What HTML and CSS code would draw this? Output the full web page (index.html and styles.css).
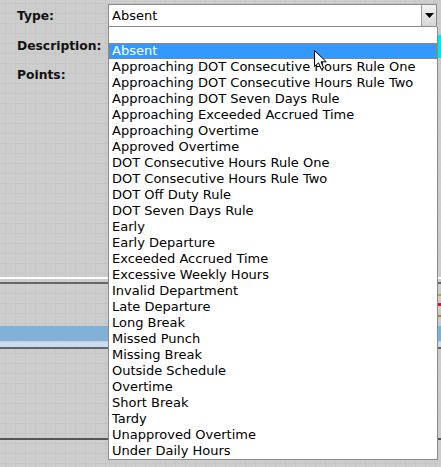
FILE: index.html
```html
<!DOCTYPE html>
<html>
<head>
<meta charset="utf-8">
<link rel="stylesheet" href="styles.css">
</head>
<body>
<div class="page">
  <div class="form">
    <div class="row row-type">
      <div class="label">Type:</div>
      <div class="select">
        <span class="select-value">Absent</span>
        <span class="select-btn"><svg width="9" height="5" viewBox="0 0 9 5"><path d="M0 0H9L4.5 5Z" fill="#000"/></svg></span>
      </div>
    </div>
    <div class="row row-desc">
      <div class="label">Description:</div>
      <div class="desc-field"></div>
    </div>
    <div class="row row-points">
      <div class="label">Points:</div>
      <div class="points-field"></div>
    </div>
  </div>
  <div class="sep-white"></div>
  <div class="sep-dark"></div>
  <div class="middle">
    <div class="mid-widget">
      <div class="mw-olive"></div>
      <div class="mw-red"></div>
      <div class="mw-olive2"></div>
    </div>
  </div>
  <div class="bar-blue"></div>
  <div class="bar-light"></div>
  <div class="bar-line"></div>
  <div class="lower"></div>
  <div class="bottom-line"></div>

  <ul class="dropdown">
    <li class="opt"></li>
    <li class="opt selected">Absent</li>
    <li class="opt">Approaching DOT Consecutive Hours Rule One</li>
    <li class="opt">Approaching DOT Consecutive Hours Rule Two</li>
    <li class="opt">Approaching DOT Seven Days Rule</li>
    <li class="opt">Approaching Exceeded Accrued Time</li>
    <li class="opt">Approaching Overtime</li>
    <li class="opt">Approved Overtime</li>
    <li class="opt">DOT Consecutive Hours Rule One</li>
    <li class="opt">DOT Consecutive Hours Rule Two</li>
    <li class="opt">DOT Off Duty Rule</li>
    <li class="opt">DOT Seven Days Rule</li>
    <li class="opt">Early</li>
    <li class="opt">Early Departure</li>
    <li class="opt">Exceeded Accrued Time</li>
    <li class="opt">Excessive Weekly Hours</li>
    <li class="opt">Invalid Department</li>
    <li class="opt">Late Departure</li>
    <li class="opt">Long Break</li>
    <li class="opt">Missed Punch</li>
    <li class="opt">Missing Break</li>
    <li class="opt">Outside Schedule</li>
    <li class="opt">Overtime</li>
    <li class="opt">Short Break</li>
    <li class="opt">Tardy</li>
    <li class="opt">Unapproved Overtime</li>
    <li class="opt">Under Daily Hours</li>
  </ul>
  <svg class="cursor" width="13" height="20" viewBox="0 0 13 20"><path d="M0.5 0.5V16.5L4.5 12.8L7.2 19L9.6 18L7 11.8H12.3Z" fill="#fff" stroke="#000" stroke-width="1" stroke-linejoin="round"/></svg>
</div>
</body>
</html>
```
FILE: styles.css
```css
html, body {
  margin: 0;
  padding: 0;
}
body {
  width: 441px;
  height: 467px;
  overflow: hidden;
  font-family: "DejaVu Sans", Verdana, sans-serif;
}
.page {
  position: relative;
  width: 441px;
  height: 467px;
  background-color: #cdcdcd;
  background-image:
    linear-gradient(to right, rgba(0,0,0,0.03) 1px, transparent 1px),
    linear-gradient(to bottom, rgba(0,0,0,0.03) 1px, transparent 1px);
  background-size: 10px 10px;
  background-position: 5px 3px;
  display: flex;
  flex-direction: column;
}
.form {
  padding: 4px 0 0 17px;
  height: 277px;
  flex: none;
  box-sizing: border-box;
}
.row {
  display: flex;
  align-items: flex-start;
}
.label {
  width: 91px;
  flex: none;
  font-weight: bold;
  font-size: 12.3px;
  color: #111;
}
.row-type .label { padding-top: 5px; }
.select {
  width: 329px;
  height: 23px;
  box-sizing: border-box;
  background: #fff;
  border: 1px solid #8a8a8a;
  display: flex;
  align-items: center;
  justify-content: space-between;
  padding-left: 3px;
  font-size: 13px;
  color: #000;
}
.select-btn {
  width: 15px;
  height: 21px;
  box-sizing: border-box;
  border-left: 1px solid #9a9a9a;
  background: linear-gradient(#f2f2f2, #d6d6d6);
  display: flex;
  align-items: center;
  justify-content: center;
}
.row-desc { margin-top: 8px; height: 23px; }
.row-desc .label { padding-top: 4px; }
.desc-field {
  flex: 1;
  height: 23px;
  background: #00e5ee;
}
.row-points { margin-top: 10px; }
.sep-white {
  height: 2px;
  flex: none;
  background: #fff;
}
.sep-dark {
  margin-top: 3px;
  height: 2px;
  flex: none;
  background: #666;
}
.middle {
  height: 42px;
  flex: none;
  display: flex;
  justify-content: flex-end;
}
.mid-widget {
  width: 4px;
  display: flex;
  flex-direction: column;
}
.mw-olive { margin-top: 10px; height: 2px; background: #b4a040; }
.mw-red { margin-top: 7px; height: 3px; background: #d01818; }
.mw-olive2 { margin-top: 9px; height: 2px; background: #9a8a40; }
.bar-blue {
  height: 15px;
  flex: none;
  background: #7fb2d6;
}
.bar-light {
  margin-top: 1px;
  height: 5px;
  flex: none;
  background: #c9dcf0;
}
.bar-line {
  height: 2px;
  flex: none;
  background: #666;
}
.lower {
  height: 89px;
  flex: none;
}
.bottom-line {
  height: 2px;
  flex: none;
  background: #555;
}
.dropdown {
  position: absolute;
  left: 108px;
  top: 27px;
  width: 330px;
  height: 433px;
  box-sizing: border-box;
  margin: 0;
  padding: 0;
  list-style: none;
  background: #fff;
  border: 1px solid #8a8a8a;
  border-top: none;
  font-size: 13px;
  color: #000;
}
.opt {
  height: 16px;
  line-height: 16px;
  padding-left: 3px;
  white-space: nowrap;
  box-sizing: border-box;
}
.opt.selected {
  background: #3399ff;
  color: #fff;
  outline: 1px dotted #e07020;
  outline-offset: -1px;
}
.cursor {
  position: absolute;
  left: 314px;
  top: 50px;
}
```
